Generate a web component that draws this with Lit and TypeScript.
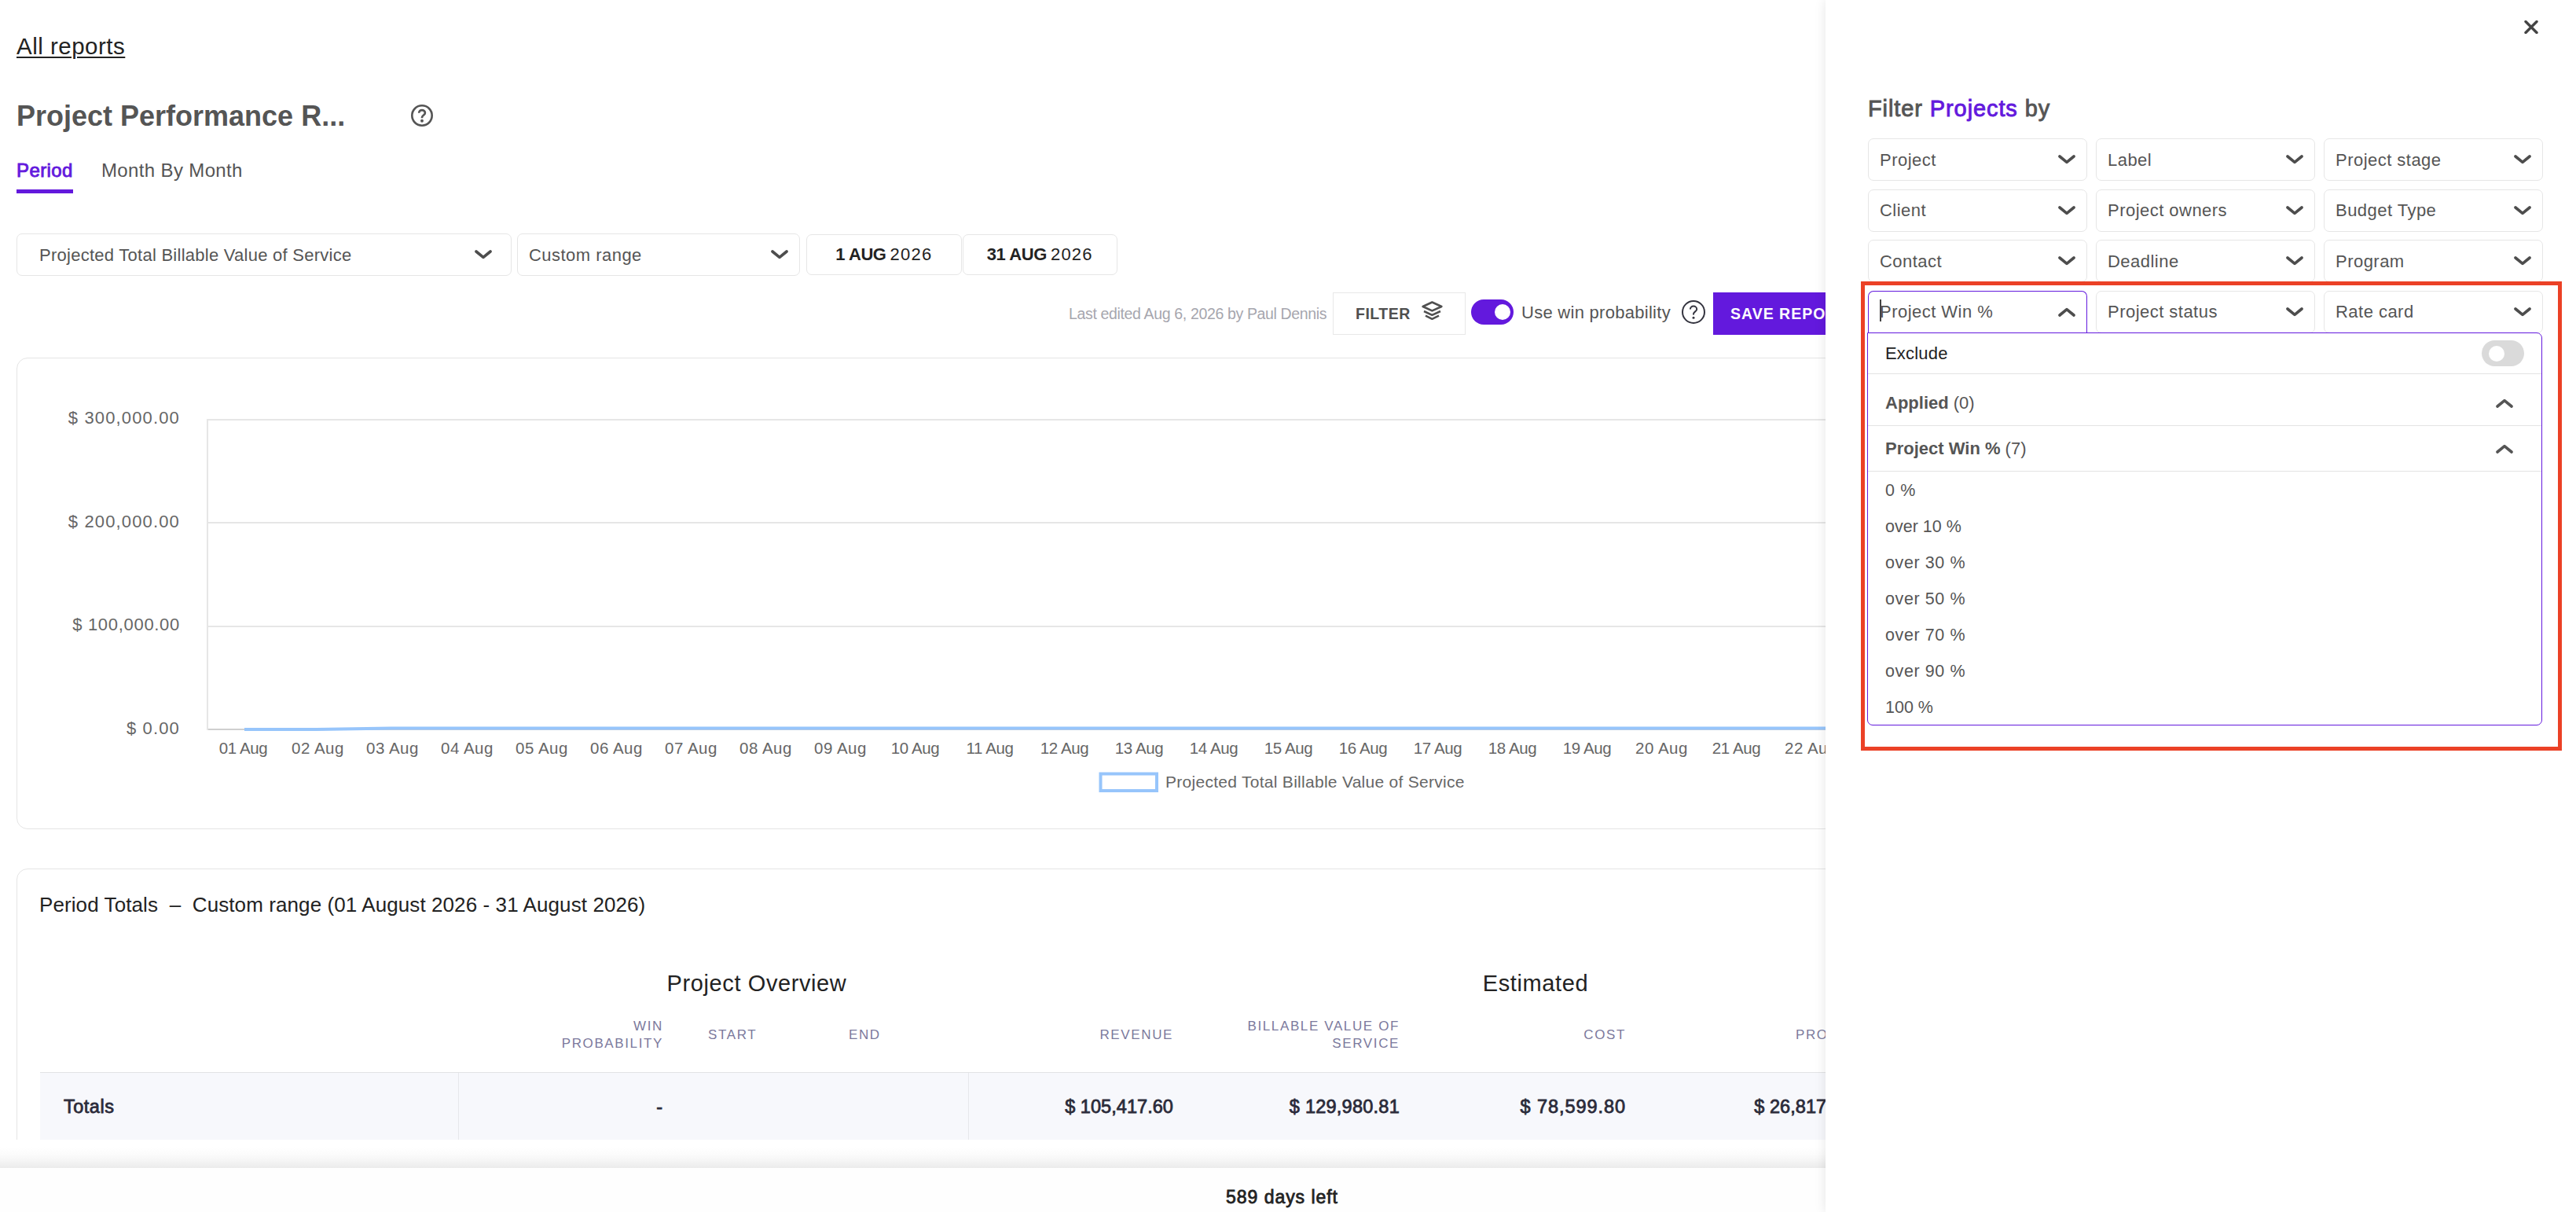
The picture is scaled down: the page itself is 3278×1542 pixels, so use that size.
import { LitElement, html, svg, css } from "lit";
import { customElement, property } from "lit/decorators.js";
import { classMap } from "lit/directives/class-map.js";

const chevron = (up = false) => html`<svg class="chevron" width="22" height="12" viewBox="0 0 22 12">
  <path d=${up ? "M2 10 L11 2.6 L20 10" : "M2 2 L11 9.4 L20 2"} fill="none" stroke="currentColor"
    stroke-width="3.6" stroke-linecap="round" stroke-linejoin="round"/></svg>`;

const help = (size: number, stroke: number, cls: string) => html`<svg class=${cls} width=${size} height=${size} viewBox="0 0 30 30">
  <circle cx="15" cy="15" r=${15 - stroke / 2} fill="none" stroke="currentColor" stroke-width=${stroke}/>
  <path d="M10.9 11.6 C10.9 9 12.7 7.6 15 7.6 C17.3 7.6 19.2 9.1 19.2 11.4 C19.2 14.2 15 14.6 15 17.6 V18.4"
    fill="none" stroke="currentColor" stroke-width=${stroke}/>
  <circle cx="15" cy="22.2" r=${stroke * 0.75} fill="currentColor"/></svg>`;

const base = css`
  :host { display: block; font-family: "Liberation Sans", Arial, sans-serif; color: #555; }
  * { box-sizing: border-box; }
  svg { display: block; flex: none; }
`;

@customElement("select-box")
class SelectBox extends LitElement {
  static styles = [base, css`
    .box { height: 54px; display: flex; align-items: center; justify-content: space-between; border: 1px solid #e6e6e6;
      border-radius: 7px; padding: 0 14px; font-size: 22px; letter-spacing: 0.47px; white-space: nowrap; background: #fff; }
    .wide { padding: 0 24px 0 28px; letter-spacing: 0.26px; }
    .open { border-color: #6319dd; border-bottom-color: transparent; border-radius: 7px 7px 0 0; }
    .label { display: flex; align-items: center; padding-top: 1px; }
    .caret { width: 2px; height: 28px; background: #444; margin: -4px -2px 0 0; }
    .chevron { color: #4d4d4d; }
  `];
  @property() label = "";
  @property({ type: Boolean }) open = false;
  @property({ type: Boolean }) wide = false;
  render() {
    return html`<div class=${classMap({ box: true, open: this.open, wide: this.wide })}>
      <span class="label">${this.open ? html`<i class="caret"></i>` : ""}${this.label}</span>${chevron(this.open)}</div>`;
  }
}

@customElement("revenue-chart")
class RevenueChart extends LitElement {
  static styles = [base, css`
    text { font-size: 21px; fill: #666; }
    .y { font-size: 22px; letter-spacing: 1.15px; }
    .y.one { letter-spacing: 0.7px; }
    .x { font-size: 20.5px; letter-spacing: 0.5px; }
    .x.ten { letter-spacing: -0.35px; }
    .legend { letter-spacing: 0.28px; }
    .grid { stroke: #e6e6e6; stroke-width: 2; }
    .zero { stroke: #cfcfcf; stroke-width: 2; }
    .series { fill: none; stroke: #97c5fb; stroke-width: 4; }
  `];
  render() {
    const ticks: [string, number, number][] = [["$ 300,000.00", 539, 534], ["$ 200,000.00", 671, 665], ["$ 100,000.00", 802, 797], ["$ 0.00", 934, 928]];
    const days = Array.from({ length: 31 }, (_, i) => i + 1);
    return html`<svg width="3234" height="598" viewBox="22 456 3234 598">
      ${ticks.map(([t, y, g], i) => svg`
        <line class=${i === 3 ? "zero" : "grid"} x1="263" x2="3220" y1=${g} y2=${g}/>
        <text class=${i === 2 ? "y one" : "y"} x="229" y=${y} text-anchor="end">${t}</text>`)}
      <line class="grid" x1="264" x2="264" y1="533" y2="929"/>
      <path class="series" d="M311 928 H403 L498 926.6 L780 926.4 H3175"/>
      ${days.map((d) => svg`<text class=${(d > 9 && d < 20) || d === 1 || d === 21 ? "x ten" : "x"} x=${309.5 + (d - 1) * 95} y="959" text-anchor="middle">${String(d).padStart(2, "0")} Aug</text>`)}
      <rect class="series" x="1400.5" y="984.5" width="71.5" height="21.5"/>
      <text class="legend" x="1483" y="1002">Projected Total Billable Value of Service</text>
    </svg>`;
  }
}

@customElement("totals-table")
class TotalsTable extends LitElement {
  static styles = [base, css`
    .title { margin-bottom: 66px; margin-left: -1px; font-size: 26px; line-height: 32px; color: #222; white-space: pre; letter-spacing: 0.09px; }
    .row { display: grid; grid-template-columns: 533px 283px 179px 187px 283px 288px 288px 288px 876px; }
    .group { font-size: 29px; line-height: 36px; color: #222; letter-spacing: 0.6px; text-align: center; }
    .overview { grid-column: 2 / 5; padding-left: 109px; }
    .estimated { grid-column: 5 / 10; padding-right: 581px; }
    .heads { height: 95px; padding-top: 1px; align-items: center; font-size: 17px; line-height: 22px; letter-spacing: 1.62px; color: #7b799c; }
    .num { text-align: right; padding-right: 23px; }
    .left { padding-left: 34px; }
    .values { height: 88px; align-items: stretch; background: #f7f8fc; border-top: 1px solid #e2e3e5; font-size: 23.5px;
      line-height: 87px; color: #2b2b3a; -webkit-text-stroke: 0.8px #2b2b3a; }
    .name { padding-left: 30px; letter-spacing: 0.5px; border-right: 1px solid #e6e7ec; }
    .divide { border-right: 1px solid #e6e7ec; }
    .values .num { letter-spacing: 0.95px; }
    .values .one { letter-spacing: 0.05px; }
    .values .mid { letter-spacing: 0.25px; }
  `];
  render() {
    return html`<div class="title">Period Totals  –  Custom range (01 August 2026 - 31 August 2026)</div>
      <div class="row"><div class="group overview">Project Overview</div><div class="group estimated">Estimated</div></div>
      <div class="row heads">
        <div></div><div class="num">WIN<br>PROBABILITY</div><div class="left">START</div><div class="left">END</div>
        <div class="num">REVENUE</div><div class="num">BILLABLE VALUE OF<br>SERVICE</div><div class="num">COST</div><div class="num">PROFIT</div>
      </div>
      <div class="row values">
        <div class="name">Totals</div><div class="num">-</div><div></div><div class="divide"></div>
        <div class="num one">$ 105,417.60</div><div class="num mid">$ 129,980.81</div><div class="num">$ 78,599.80</div><div class="num one">$ 26,817.80</div>
      </div>`;
  }
}

@customElement("filter-drawer")
class FilterDrawer extends LitElement {
  static styles = [base, css`
    .drawer { height: 100%; background: #fff; box-shadow: 0 0 14px rgba(0, 0, 0, 0.1); padding: 26px 42px 0 54px; display: flex; flex-direction: column; }
    .close { margin: 0 6px 0 auto; color: #444; }
    .heading { margin-top: 77px; font-size: 29px; line-height: 36px; letter-spacing: 0.9px; -webkit-text-stroke: 0.9px currentColor; }
    .accent { color: #6319dd; }
    .filters { margin-top: 20px; display: grid; grid-template-columns: repeat(3, 279px); gap: 10.67px 11px; }
    .menu { position: absolute; left: 53px; top: 423px; width: 859px; border: 1px solid #6319dd; border-radius: 0 7px 7px 7px; background: #fff; }
    .line { display: flex; align-items: center; justify-content: space-between; padding-left: 22px; border-bottom: 1px solid #e3e3e3; font-size: 22px; }
    .exclude { height: 52px; padding-right: 22px; color: #222; letter-spacing: 0.2px; }
    .applied { height: 66px; padding-top: 9px; padding-right: 36px; }
    .section { height: 58px; padding-right: 36px; }
    .toggle { width: 54px; height: 33px; border-radius: 17px; background: #dadada; padding: 6.5px 9px; }
    .knob { width: 20px; height: 20px; border-radius: 50%; background: #fff; }
    .option { height: 46px; line-height: 48px; padding-left: 22px; font-size: 21.5px; letter-spacing: 0.6px; }
    .tight { letter-spacing: 0; }
    .mark { position: absolute; left: 45px; top: 358px; width: 892px; height: 597px; border: 5px solid #eb4126; }
  `];
  render() {
    const filters = ["Project", "Label", "Project stage", "Client", "Project owners", "Budget Type", "Contact", "Deadline", "Program", "Project Win %", "Project status", "Rate card"];
    const options = ["0 %", "over 10 %", "over 30 %", "over 50 %", "over 70 %", "over 90 %", "100 %"];
    return html`<div class="drawer">
      <svg class="close" width="18" height="17" viewBox="0 0 18 17"><path d="M2 1.5 L16 15.5 M16 1.5 L2 15.5" stroke="currentColor" stroke-width="3.4" stroke-linecap="round"/></svg>
      <div class="heading">Filter <span class="accent">Projects</span> by</div>
      <div class="filters">${filters.map((f) => html`<select-box label=${f} ?open=${f === "Project Win %"}></select-box>`)}</div>
      <div class="menu">
        <div class="line exclude">Exclude<div class="toggle"><div class="knob"></div></div></div>
        <div class="line applied"><span><b>Applied</b> (0)</span>${chevron(true)}</div>
        <div class="line section"><span><b>Project Win %</b> (7)</span>${chevron(true)}</div>
        ${options.map((o) => html`<div class=${classMap({ option: true, tight: o.includes("1") })}>${o}</div>`)}
      </div>
      <div class="mark"></div>
    </div>`;
  }
}

@customElement("app-root")
class AppRoot extends LitElement {
  static styles = [base, css`
    .app { position: relative; width: 3278px; height: 1542px; overflow: hidden; background: #fff; display: flex; flex-direction: column; }
    .main { height: 1450px; overflow: hidden; padding: 41px 21px 0; flex: none; }
    .back { width: max-content; font-size: 29.5px; line-height: 36px; letter-spacing: 0.5px; color: #222; text-decoration: underline; text-decoration-thickness: 2px; text-underline-offset: 3px; }
    .titlebar { display: flex; align-items: center; margin-top: 48px; height: 44px; }
    .title { width: 502px; font-size: 36px; line-height: 44px; font-weight: 700; letter-spacing: 0; margin-top: 1px; }
    .tabs { display: flex; gap: 36px; margin-top: 33px; }
    .tab { height: 44px; font-size: 24px; line-height: 30px; letter-spacing: 0.36px; }
    .active { width: 72px; color: #6319dd; letter-spacing: 0.4px; -webkit-text-stroke: 0.9px currentColor; border-bottom: 5px solid #6319dd; }
    .controls { display: flex; align-items: center; margin-top: 51px; height: 54px; }
    .metric { width: 630px; margin-right: 7px; }
    .range { width: 360px; margin-right: 8px; }
    .date { width: 197.5px; height: 52px; margin-right: 1px; display: flex; align-items: center; justify-content: center; gap: 5px;
      border: 1px solid #e6e6e6; border-radius: 7px; font-size: 22px; color: #222; letter-spacing: 1.2px; }
    .day { letter-spacing: -0.4px; }
    .actions { display: flex; align-items: center; margin-top: 21px; height: 54px; padding-left: 1339px; white-space: nowrap; }
    .edited { width: 336px; font-size: 19.5px; letter-spacing: -0.35px; color: #a6a6ae; }
    .filter { width: 169px; height: 54px; padding-left: 28px; display: flex; align-items: center; gap: 14px; border: 1px solid #e8e8e8;
      font-size: 19.5px; font-weight: 700; letter-spacing: 0.5px; color: #4f4f4f; }
    .layers { margin-bottom: 8px; }
    .toggle { width: 54px; height: 32px; margin: 0 10px 4px 7px; padding: 6px 4px; border-radius: 16px; background: #6319dd; display: flex; justify-content: flex-end; }
    .knob { width: 20px; height: 20px; border-radius: 50%; background: #fff; }
    .win { width: 204px; font-size: 22px; letter-spacing: 0.28px; margin-bottom: 2px; }
    .tip { color: #34343f; margin: 0 10px 4px 0; }
    .save { width: 260px; height: 54px; line-height: 54px; padding-left: 22px; background: #6319dd; color: #fff; font-size: 19.5px; font-weight: 700; letter-spacing: 1px; }
    .card { width: 3236px; border: 1px solid #e5e5e5; border-radius: 14px; }
    .chart { height: 600px; margin-top: 29px; }
    .totals { height: 500px; margin-top: 50px; padding: 29px 0 0 29px; overflow: hidden; }
    .fade { height: 26px; margin-top: 10px; flex: none; background: linear-gradient(to bottom, #fff 0%, #fbfbfb 35%, #f5f5f5 65%, #ebebeb 100%); }
    .footer { flex: 1; background: #fefefe; display: flex; align-items: center; justify-content: center; padding: 18px 15px 0 0;
      font-size: 23px; letter-spacing: 0.95px; color: #222; -webkit-text-stroke: 0.8px #222; }
    .drawer { position: absolute; top: 0; right: 0; width: 955px; height: 1542px; }
  `];
  render() {
    return html`<div class="app">
      <div class="main">
        <div class="back">All reports</div>
        <div class="titlebar"><div class="title">Project Performance R...</div>${help(28, 2.8, "info")}</div>
        <div class="tabs"><div class="tab active">Period</div><div class="tab">Month By Month</div></div>
        <div class="controls">
          <select-box class="metric" wide label="Projected Total Billable Value of Service"></select-box>
          <select-box class="range" label="Custom range"></select-box>
          <div class="date"><b class="day">1 AUG</b> 2026</div>
          <div class="date"><b class="day">31 AUG</b> 2026</div>
        </div>
        <div class="actions">
          <div class="edited">Last edited Aug 6, 2026 by Paul Dennis</div>
          <div class="filter">FILTER<svg class="layers" width="27" height="25" viewBox="0 0 27 25">
            <g fill="none" stroke="currentColor" stroke-width="2.5" stroke-linejoin="round"><path d="M1.6 7 L13.4 1.5 L25.4 7 L13.4 12.4 Z"/><path d="M3 13 L13.4 17.8 L24 13"/><path d="M5 18.6 L13.4 22.8 L22 18.6"/></g></svg></div>
          <div class="toggle"><div class="knob"></div></div>
          <div class="win">Use win probability</div>
          ${help(30, 2, "tip")}
          <div class="save">SAVE REPORT</div>
        </div>
        <div class="card chart"><revenue-chart></revenue-chart></div>
        <div class="card totals"><totals-table></totals-table></div>
      </div>
      <div class="fade"></div>
      <div class="footer">589 days left</div>
      <filter-drawer class="drawer"></filter-drawer>
    </div>`;
  }
}
